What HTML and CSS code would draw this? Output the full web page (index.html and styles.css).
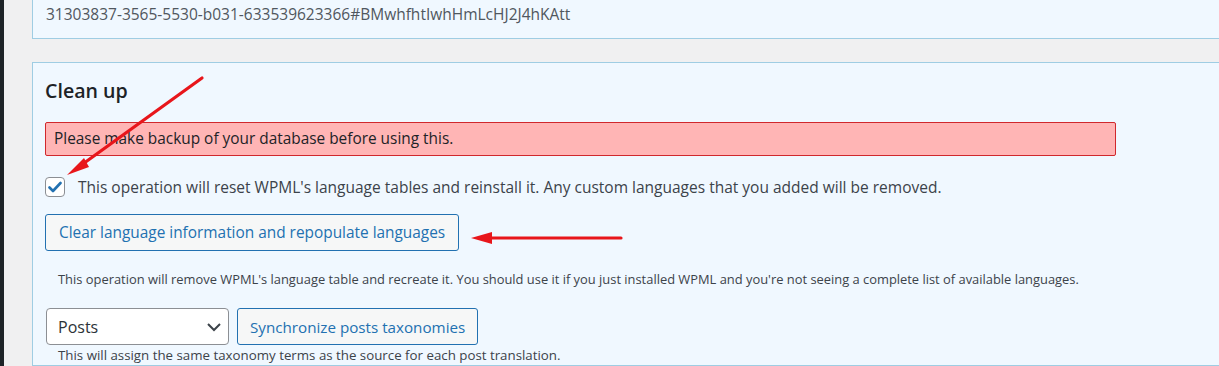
FILE: index.html
```html
<!DOCTYPE html>
<html lang="en">
<head>
    <meta charset="UTF-8">
    <meta name="viewport" content="width=device-width, initial-scale=1.0">
    <title>WPML Troubleshooting</title>
    <link rel="stylesheet" href="styles.css">
</head>
<body>
    <div class="layout">
        <div class="sidebar"></div>

        <main class="content">
            <div class="card card-top">
                <p class="site-key">31303837-3565-5530-b031-633539623366#BMwhfhtIwhHmLcHJ2J4hKAtt</p>
            </div>

            <div class="card">
                <h3>Clean up</h3>

                <div class="notice-error">Please make backup of your database before using this.</div>

                <label class="check-row">
                    <span class="checkbox">
                        <svg width="14" height="12" viewBox="0 0 14 12"><path d="M1.5 6.5 L5 10 L12.5 2" fill="none" stroke="#2271b1" stroke-width="2.6" stroke-linecap="round" stroke-linejoin="round"/></svg>
                    </span>
                    This operation will reset WPML's language tables and reinstall it. Any custom languages that you added will be removed.
                </label>

                <button class="button">Clear language information and repopulate languages</button>

                <p class="description">This operation will remove WPML's language table and recreate it. You should use it if you just installed WPML and you're not seeing a complete list of available languages.</p>

                <div class="sync-row">
                    <div class="select">
                        <span>Posts</span>
                        <svg width="16" height="10" viewBox="0 0 16 10"><path d="M2 2 L8 8 L14 2" fill="none" stroke="#3c434a" stroke-width="2"/></svg>
                    </div>
                    <button class="button">Synchronize posts taxonomies</button>
                </div>
                <p class="description tight">This will assign the same taxonomy terms as the source for each post translation.</p>
            </div>
        </main>
    </div>

    <!-- annotation arrows drawn over the screenshot -->
    <svg class="arrows" width="1219" height="366" viewBox="0 0 1219 366">
        <line x1="202" y1="78" x2="80" y2="166" stroke="#e8161b" stroke-width="3.2" stroke-linecap="round"/>
        <polygon points="67,175 84,158 89,167" fill="#e8161b"/>
        <line x1="621" y1="238" x2="488" y2="238" stroke="#e8161b" stroke-width="3.2" stroke-linecap="round"/>
        <polygon points="471,238 492,232 492,244" fill="#e8161b"/>
    </svg>
</body>
</html>
```

FILE: styles.css
```css
body {
    margin: 0;
    background: #f0f0f1;
    font-family: "Open Sans", "Noto Sans", sans-serif;
    color: #3c434a;
    overflow: hidden;
    position: relative;
}
.layout {
    display: flex;
    height: 366px;
}
.sidebar {
    width: 4px;
    background: #1d2327;
    flex-shrink: 0;
}
.content {
    flex: 1;
    padding-left: 28px;
    margin-right: -40px;
}
.card {
    background: #f0f8ff;
    border: 1px solid #9fcde3;
    padding: 14px 12px 0;
    margin-top: 23px;
}
.card-top {
    border-top: none;
    margin-top: 0;
    padding: 2px 13px 12px;
}
.site-key {
    margin: 0;
    font-size: 15.5px;
    line-height: 24px;
    color: #50575e;
}
h3 {
    margin: 0;
    font-size: 19.6px;
    line-height: 28px;
    font-weight: 600;
    color: #1d2327;
}
.notice-error {
    margin-top: 17px;
    width: 1053px;
    background: #ffb5b5;
    border: 1px solid #d0282d;
    border-radius: 2px;
    padding: 4px 8px;
    font-size: 15.4px;
    line-height: 24px;
    color: #1d2327;
}
.check-row {
    display: flex;
    align-items: center;
    gap: 13px;
    margin-top: 19px;
    font-size: 15.5px;
    line-height: 24px;
}
.checkbox {
    width: 18px;
    height: 18px;
    border: 1px solid #8c8f94;
    border-radius: 4px;
    background: #fff;
    display: flex;
    align-items: center;
    justify-content: center;
}
.button {
    display: inline-block;
    font-family: inherit;
    font-size: 15.4px;
    color: #2271b1;
    background: #f6f7f7;
    border: 1px solid #2271b1;
    border-radius: 3px;
    height: 37px;
    padding: 0 13px;
    margin-top: 15px;
}
.description {
    margin: 18px 0 0;
    padding-left: 13px;
    font-size: 12.9px;
    line-height: 20px;
}
.description.tight {
    margin-top: 0;
    font-size: 13.3px;
}
.sync-row {
    display: flex;
    gap: 8px;
    margin-top: 19px;
}
.sync-row .button {
    margin-top: 0;
    padding: 0 12px;
    font-size: 15.2px;
}
.select {
    width: 164px;
    height: 35px;
    margin-left: 1px;
    background: #fff;
    border: 1px solid #8c8f94;
    border-radius: 4px;
    padding: 0 6px 0 11px;
    display: flex;
    align-items: center;
    justify-content: space-between;
    font-size: 16px;
    color: #2c3338;
}
.arrows {
    position: absolute;
    top: 0;
    left: 0;
    pointer-events: none;
}
```
